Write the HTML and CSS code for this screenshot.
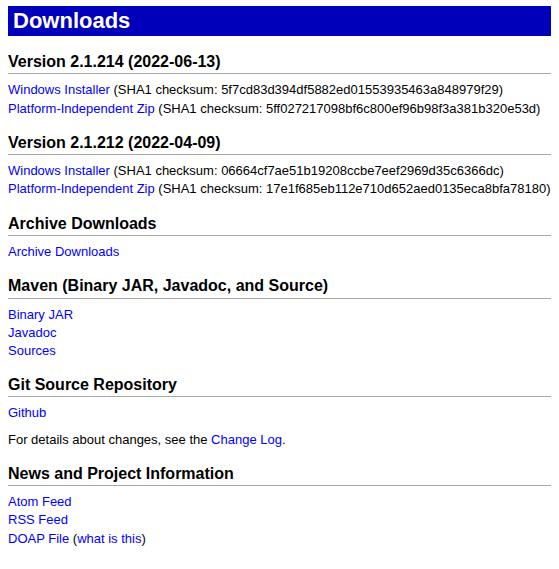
FILE: index.html
```html
<!DOCTYPE html>
<html lang="en">
<head>
    <meta charset="UTF-8">
    <title>Downloads</title>
    <link rel="stylesheet" href="styles.css">
</head>
<body>
    <h1>Downloads</h1>

    <h3>Version 2.1.214 (2022-06-13)</h3>
    <p>
        <a href="#">Windows Installer</a> (SHA1 checksum: 5f7cd83d394df5882ed01553935463a848979f29)<br>
        <a href="#">Platform-Independent Zip</a> (SHA1 checksum: 5ff027217098bf6c800ef96b98f3a381b320e53d)
    </p>

    <h3>Version 2.1.212 (2022-04-09)</h3>
    <p>
        <a href="#">Windows Installer</a> (SHA1 checksum: 06664cf7ae51b19208ccbe7eef2969d35c6366dc)<br>
        <a href="#">Platform-Independent Zip</a> (SHA1 checksum: 17e1f685eb112e710d652aed0135eca8bfa78180)
    </p>

    <h3>Archive Downloads</h3>
    <p>
        <a href="#">Archive Downloads</a>
    </p>

    <h3>Maven (Binary JAR, Javadoc, and Source)</h3>
    <p>
        <a href="#">Binary JAR</a><br>
        <a href="#">Javadoc</a><br>
        <a href="#">Sources</a>
    </p>

    <h3>Git Source Repository</h3>
    <p>
        <a href="#">Github</a>
    </p>
    <p class="after">
        For details about changes, see the <a href="#">Change Log</a>.
    </p>

    <h3>News and Project Information</h3>
    <p>
        <a href="#">Atom Feed</a><br>
        <a href="#">RSS Feed</a><br>
        <a href="#">DOAP File</a> (<a href="#">what is this</a>)
    </p>
</body>
</html>
```

FILE: styles.css
```css
body {
    font: 13px/1.4 "Liberation Sans", Arial, sans-serif;
    color: #000;
    background-color: #fff;
    margin: 6px 8px;
}

h1, h3 {
    font-family: "Liberation Sans", Arial, sans-serif;
    font-weight: bold;
}

h1 {
    background-color: #0000bb;
    color: #fff;
    font-size: 22px;
    line-height: 30px;
    padding: 0 5px;
    margin: 0;
}

h3 {
    font-size: 16px;
    line-height: 1.4;
    margin: 14px 0 0 0;
    border-bottom: 1px solid #aaa;
}

h1 + h3 {
    margin-top: 15px;
}

p {
    margin: 7px 0 0 0;
    white-space: nowrap;
}

p.after {
    margin-top: 8px;
}

a {
    color: #0000ff;
    text-decoration: none;
}
```
